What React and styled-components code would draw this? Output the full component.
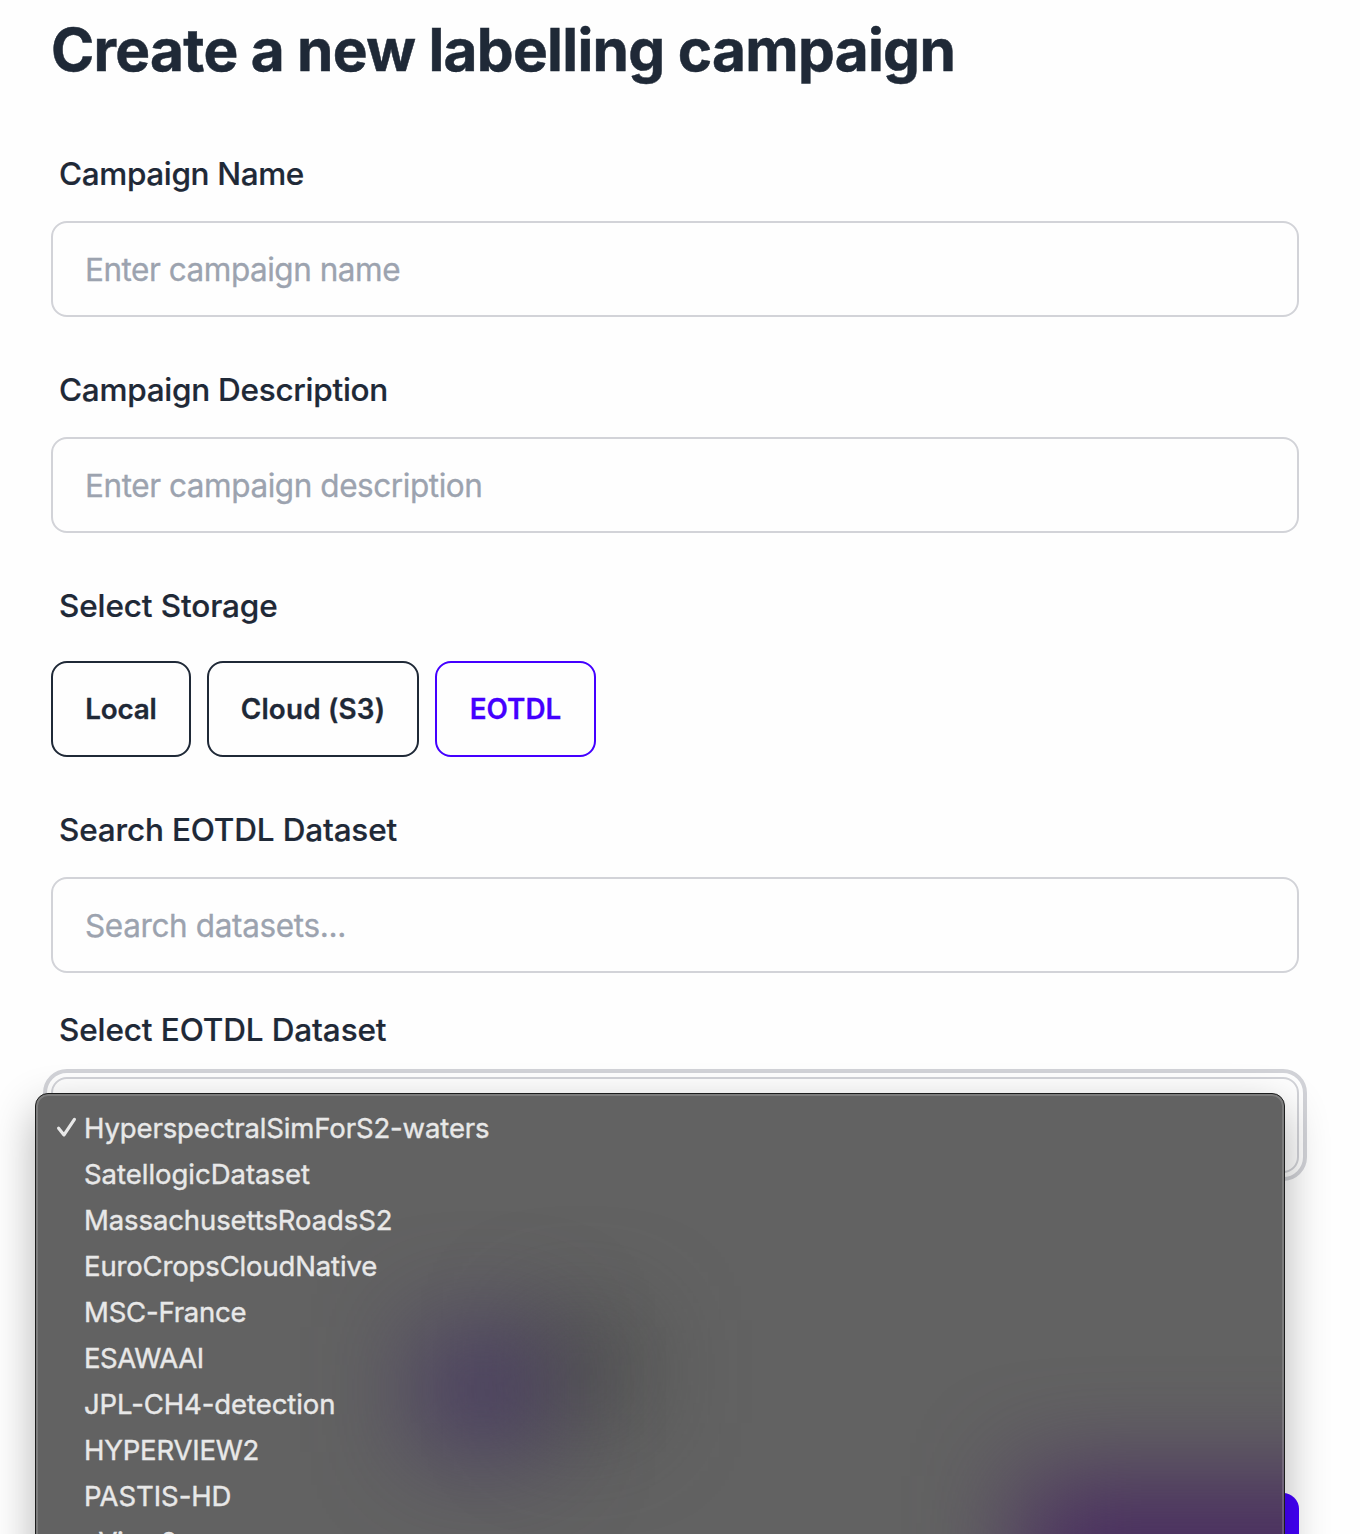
import React from "react";
import styled, { createGlobalStyle } from "styled-components";

const GlobalStyle = createGlobalStyle`
  *, *::before, *::after { box-sizing: border-box; }
  html, body { margin: 0; background: #fefefe; }
  body, input, button {
    font-family: Inter, "Liberation Sans", sans-serif;
    color: #1f2937;
  }
`;

const Page = styled.main`
  position: relative;
  height: 1534px;
  overflow: hidden;
  padding: 14px 61px 0 51px;
`;

const Title = styled.h1`
  margin: 0 0 52px;
  font-size: 58.5px;
  line-height: 72px;
  font-weight: 700;
  letter-spacing: -0.7px;
  -webkit-text-stroke: 0.5px currentColor;
  white-space: nowrap;
`;

const Form = styled.form`
  display: flex;
  flex-direction: column;
`;

const Field = styled.div`
  display: flex;
  flex-direction: column;
  margin-bottom: ${(p) => p.$after}px;
`;

const Label = styled.label`
  padding: 16px 8px;
  margin-bottom: ${(p) => p.$gap}px;
  font-size: 31.5px;
  line-height: 40px;
  font-weight: 500;
  letter-spacing: ${(p) => p.$track}px;
  -webkit-text-stroke: 0.2px currentColor;
  white-space: nowrap;
`;

const Input = styled.input`
  width: 100%;
  height: 96px;
  padding: 0 32px;
  border: 2px solid #d2d3d8;
  border-radius: 16px;
  background: transparent;
  font-size: 31.5px;
  letter-spacing: ${(p) => p.$track}px;
  outline: none;
  &::placeholder {
    color: #9ca3af;
    opacity: 1;
    -webkit-text-stroke: 0.3px #9ca3af;
  }
`;

const Options = styled.div`
  display: flex;
  gap: 16px;
`;

const Option = styled.button`
  width: ${(p) => p.$width}px;
  height: 96px;
  padding: 0;
  border: 2px solid currentColor;
  border-radius: 16px;
  background: transparent;
  color: ${(p) => (p.$active ? "#4400ff" : "#1f2937")};
  font-size: 27.8px;
  font-weight: 600;
  letter-spacing: ${(p) => p.$track}px;
  -webkit-text-stroke: 0.3px currentColor;
  white-space: nowrap;
`;

const SelectBox = styled.div`
  height: 96px;
  border: 2px solid #d2d3d8;
  border-radius: 16px;
  outline: 4px solid #d2d3d8;
  outline-offset: 4px;
`;

const Actions = styled.div`
  display: flex;
  justify-content: flex-end;
`;

const Submit = styled.button`
  width: 250px;
  height: 96px;
  border: 0;
  border-radius: 16px;
  background: #4400ff;
`;

const Menu = styled.div`
  position: absolute;
  top: 1093px;
  left: 35px;
  width: 1250px;
  height: 520px;
  overflow: hidden;
  border: 1px solid #1c1d1d;
  border-radius: 13px;
  background: #626262;
  box-shadow: 0 16px 44px rgba(0, 0, 0, 0.3);
  &::after {
    content: "";
    position: absolute;
    inset: 0;
    border: 2px solid rgba(255, 255, 255, 0.17);
    border-radius: 12px;
  }
`;

const Glow = styled.div`
  position: absolute;
  left: ${(p) => p.$x}px;
  top: ${(p) => p.$y}px;
  width: ${(p) => p.$w}px;
  height: ${(p) => p.$h}px;
  background: ${(p) => p.$color};
  filter: blur(${(p) => p.$blur}px);
`;

const List = styled.ul`
  position: relative;
  margin: 0;
  padding: 11px 0 0 20px;
  list-style: none;
`;

const Item = styled.li`
  display: flex;
  align-items: center;
  height: 46px;
  color: #e8e8e8;
  font-size: 27.5px;
  letter-spacing: ${(p) => p.$track}px;
  -webkit-text-stroke: 0.4px currentColor;
  white-space: nowrap;
`;

const Mark = styled.span`
  display: flex;
  width: 28px;
`;

const items = [
  ["HyperspectralSimForS2-waters", -0.12],
  ["SatellogicDataset", -0.02],
  ["MassachusettsRoadsS2", -0.1],
  ["EuroCropsCloudNative", -0.15],
  ["MSC-France", -0.2],
  ["ESAWAAI", -0.45],
  ["JPL-CH4-detection", -0.08],
  ["HYPERVIEW2", -0.2],
  ["PASTIS-HD", -0.05],
  ["xView2", -0.45],
];

function Check() {
  return (
    <svg width="21" height="22" viewBox="0 0 21 22" fill="none">
      <path d="M2.6 11.3 8 17.9 18.4 2.4" stroke="#e8e8e8" strokeWidth="3.2" strokeLinecap="round" strokeLinejoin="round" />
    </svg>
  );
}

export default function App() {
  return (
    <Page>
      <GlobalStyle />
      <Title>Create a new labelling campaign</Title>
      <Form>
        <Field $after={37}>
          <Label $gap={11} $track={-0.36}>Campaign Name</Label>
          <Input $track={-0.48} placeholder="Enter campaign name" />
        </Field>
        <Field $after={37}>
          <Label $gap={11} $track={-0.27}>Campaign Description</Label>
          <Input $track={-0.44} placeholder="Enter campaign description" />
        </Field>
        <Field $after={37}>
          <Label $gap={19} $track={-0.12}>Select Storage</Label>
          <Options>
            <Option type="button" $width={140} $track={-0.2}>Local</Option>
            <Option type="button" $width={212} $track={0.2}>Cloud (S3)</Option>
            <Option type="button" $width={161} $track={0} $active>EOTDL</Option>
          </Options>
        </Field>
        <Field $after={21}>
          <Label $gap={11} $track={-0.17}>Search EOTDL Dataset</Label>
          <Input $track={-0.36} placeholder="Search datasets..." />
        </Field>
        <Field $after={320}>
          <Label $gap={11} $track={-0.12}>Select EOTDL Dataset</Label>
          <SelectBox />
        </Field>
        <Actions>
          <Submit type="button" aria-label="Create" />
        </Actions>
      </Form>
      <Menu>
        <Glow $x={490} $y={225} $w={110} $h={105} $blur={50} $color="rgba(62,64,62,0.6)" />
        <Glow $x={382} $y={233} $w={130} $h={125} $blur={50} $color="rgba(66,48,98,0.75)" />
        <Glow $x={985} $y={382} $w={430} $h={260} $blur={50} $color="#4a2e60" />
        <List>
          {items.map(([name, track], i) => (
            <Item key={name} $track={track}>
              <Mark>{i === 0 && <Check />}</Mark>
              {name}
            </Item>
          ))}
        </List>
      </Menu>
    </Page>
  );
}
